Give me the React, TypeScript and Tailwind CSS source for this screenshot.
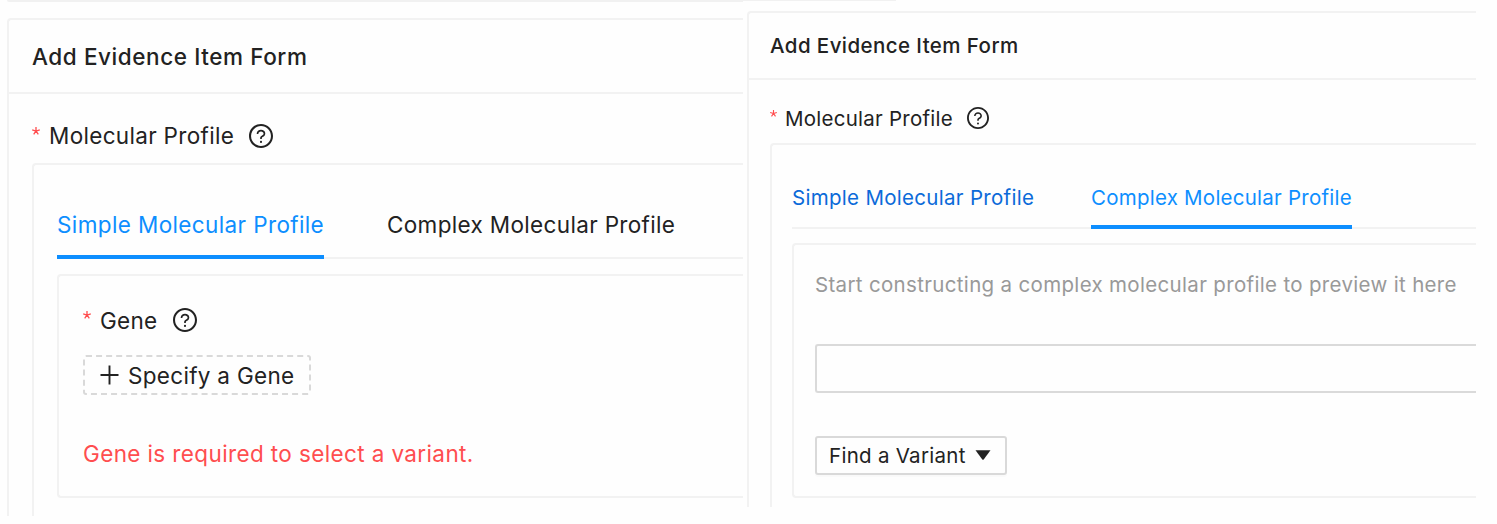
import type { ReactNode } from 'react';

function HelpIcon({ className }: { className: string }) {
  return (
    <svg viewBox="64 64 896 896" fill="currentColor" className={className} aria-hidden="true">
      <path d="M512 64C264.6 64 64 264.6 64 512s200.600 448 448 448 448-200.600 448-448S759.400 64 512 64zm0 820c-205.400 0-372-166.600-372-372s166.600-372 372-372 372 166.600 372 372-166.600 372-372 372z" />
      <path d="M623.600 316.700C593.600 290.400 554 276 512 276s-81.600 14.500-111.600 40.700C369.200 344 352 380.700 352 420v7.600c0 4.400 3.600 8 8 8h48c4.400 0 8-3.600 8-8V420c0-44.100 43.100-80 96-80s96 35.900 96 80c0 31.100-22 59.600-56.100 72.700-21.200 8.100-39.200 22.300-52.100 40.900-13.100 19-19.900 41.800-19.900 64.900V620c0 4.400 3.600 8 8 8h48c4.400 0 8-3.600 8-8v-22.700a48.300 48.300 0 0 1 30.900-44.800c59-22.700 97.100-74.700 97.100-132.500.100-39.300-17.100-76-48.300-103.300zM472 732a40 40 0 1 0 80 0 40 40 0 1 0-80 0z" />
    </svg>
  );
}

function Asterisk({ className }: { className: string }) {
  return (
    <svg viewBox="0 0 8 8" fill="none" stroke="#ff4d4f" strokeWidth="1.3" className={className} aria-hidden="true">
      <path d="M4 .1V4M.2 2.800 4 4l3.800-1.200M1.700 7.300 4 4l2.300 3.300" />
    </svg>
  );
}

function Label({ children, className }: { children: ReactNode; className: string }) {
  return <span className={`whitespace-nowrap ${className}`}>{children}</span>;
}

function SimplePane() {
  return (
    <section className="flex h-[516px] w-[743px] shrink-0 flex-col overflow-hidden pl-[7px] text-[22.5px] leading-[28px]">
      <div className="h-[2px] shrink-0 rounded-bl-sm bg-[#f1f1f1]" />
      <div className="mt-[16px] flex grow flex-col rounded-tl-[4px] border-t-2 border-l-2 border-[#f2f2f2]">
        <header className="flex h-[74px] items-center border-b-2 border-[#f2f2f2] pt-px pl-[23px]">
          <Label className="font-[450] tracking-[0.58px]">Add Evidence Item Form</Label>
        </header>
        <div className="flex grow flex-col pt-[28px] pl-[23px]">
          <div className="flex h-[28px] items-center">
            <Asterisk className="mb-[11px] size-[8px]" />
            <Label className="ml-[9px] tracking-[0.32px]">Molecular Profile</Label>
            <HelpIcon className="ml-[15px] size-[24px]" />
          </div>
          <div className="mt-[13px] flex grow flex-col rounded-tl-[4px] border-t-2 border-l-2 border-[#f2f2f2] pt-[46px] pl-[23px]">
            <nav className="flex h-[48px] border-b-2 border-[#f2f2f2]">
              <div className="-mb-[2px] w-[267px] border-b-4 border-[#0d8eff] text-[#0d8eff]">
                <Label className="tracking-[0.38px]">Simple Molecular Profile</Label>
              </div>
              <Label className="ml-[63px] tracking-[0.34px]">Complex Molecular Profile</Label>
            </nav>
            <div className="mt-[15px] h-[224px] rounded-l-[4px] border-2 border-r-0 border-[#f2f2f2] pt-[31px] pl-[24px]">
              <div className="flex h-[28px] items-center">
                <Asterisk className="mb-[13px] size-[8px]" />
                <Label className="ml-[9px] tracking-[0.3px]">Gene</Label>
                <HelpIcon className="mb-[2px] ml-[15px] size-[24px]" />
              </div>
              <button className="mt-[20px] flex h-[40px] w-[228px] items-center rounded-[3px] border-2 border-dashed border-[#d9d9d9] pt-px pl-[15px]">
                <svg viewBox="0 0 20 20" stroke="currentColor" strokeWidth="1.900" className="mb-px size-[20px]" aria-hidden="true">
                  <path d="M9.500 .5v19M.5 10h18" />
                </svg>
                <Label className="ml-[8px] tracking-[0.3px]">Specify a Gene</Label>
              </button>
              <p className="mt-[45px] text-[#ff4d4f]">
                <Label className="tracking-[0.38px]">Gene is required to select a variant.</Label>
              </p>
            </div>
          </div>
        </div>
      </div>
    </section>
  );
}

function ComplexPane() {
  return (
    <section className="flex h-[507px] w-[733px] shrink-0 flex-col overflow-hidden text-[20.5px] leading-[26px]">
      <div className="h-px w-[153px] shrink-0 bg-[#f1f1f1]" />
      <div className="mt-[10px] ml-[4px] flex grow flex-col rounded-tl-[4px] border-t-2 border-l-2 border-[#f2f2f2]">
        <header className="flex h-[67px] items-center border-b-2 border-[#f2f2f2] pt-px pl-[21px]">
          <Label className="font-[450] tracking-[0.42px]">Add Evidence Item Form</Label>
        </header>
        <div className="flex grow flex-col pt-[26px] pl-[21px]">
          <div className="flex h-[26px] items-center">
            <Asterisk className="mb-[12px] size-[7px]" />
            <Label className="ml-[8px] tracking-[0.25px]">Molecular Profile</Label>
            <HelpIcon className="mb-[2px] ml-[14px] size-[22px]" />
          </div>
          <div className="mt-[11px] flex grow flex-col rounded-tl-[4px] border-t-2 border-l-2 border-[#f2f2f2] pt-[40px] pl-[20px]">
            <nav className="flex h-[44px] border-b-2 border-[#f2f2f2]">
              <Label className="w-[299px] tracking-[0.3px] text-[#0b6ad9]">Simple Molecular Profile</Label>
              <div className="-mb-[2px] w-[261px] border-b-4 border-[#0d8eff] text-[#0d8eff]">
                <Label className="tracking-[0.24px]">Complex Molecular Profile</Label>
              </div>
            </nav>
            <div className="mt-[14px] h-[255px] rounded-l-[4px] border-2 border-r-0 border-[#f2f2f2] pt-[27px] pl-[21px]">
              <p className="text-[#999]">
                <Label className="tracking-[0.33px]">Start constructing a complex molecular profile to preview it here</Label>
              </p>
              <div className="mt-[46px] h-[49px] rounded-l-[3px] border-2 border-r-0 border-[#dadada]" />
              <button className="mt-[43px] flex h-[39px] w-[192px] items-center rounded-[3px] border-2 border-[#d9d9d9] pt-px pl-[12px] shadow-[0_2px_1px_rgba(0,0,0,0.02)]">
                <Label className="tracking-[0.28px]">Find a Variant</Label>
                <svg viewBox="0 0 16 10" fill="currentColor" className="mb-[2px] ml-[9px] h-[10px] w-[16px]" aria-hidden="true">
                  <path d="M.5.3h15L8.700 9.400q-.7.700-1.400 0z" />
                </svg>
              </button>
            </div>
          </div>
        </div>
      </div>
    </section>
  );
}

export default function App() {
  return (
    <main className="flex h-[524px] w-[1497px] items-start overflow-hidden bg-[#fefefe] font-['Inter',sans-serif] text-[#222]">
      <SimplePane />
      <ComplexPane />
    </main>
  );
}
